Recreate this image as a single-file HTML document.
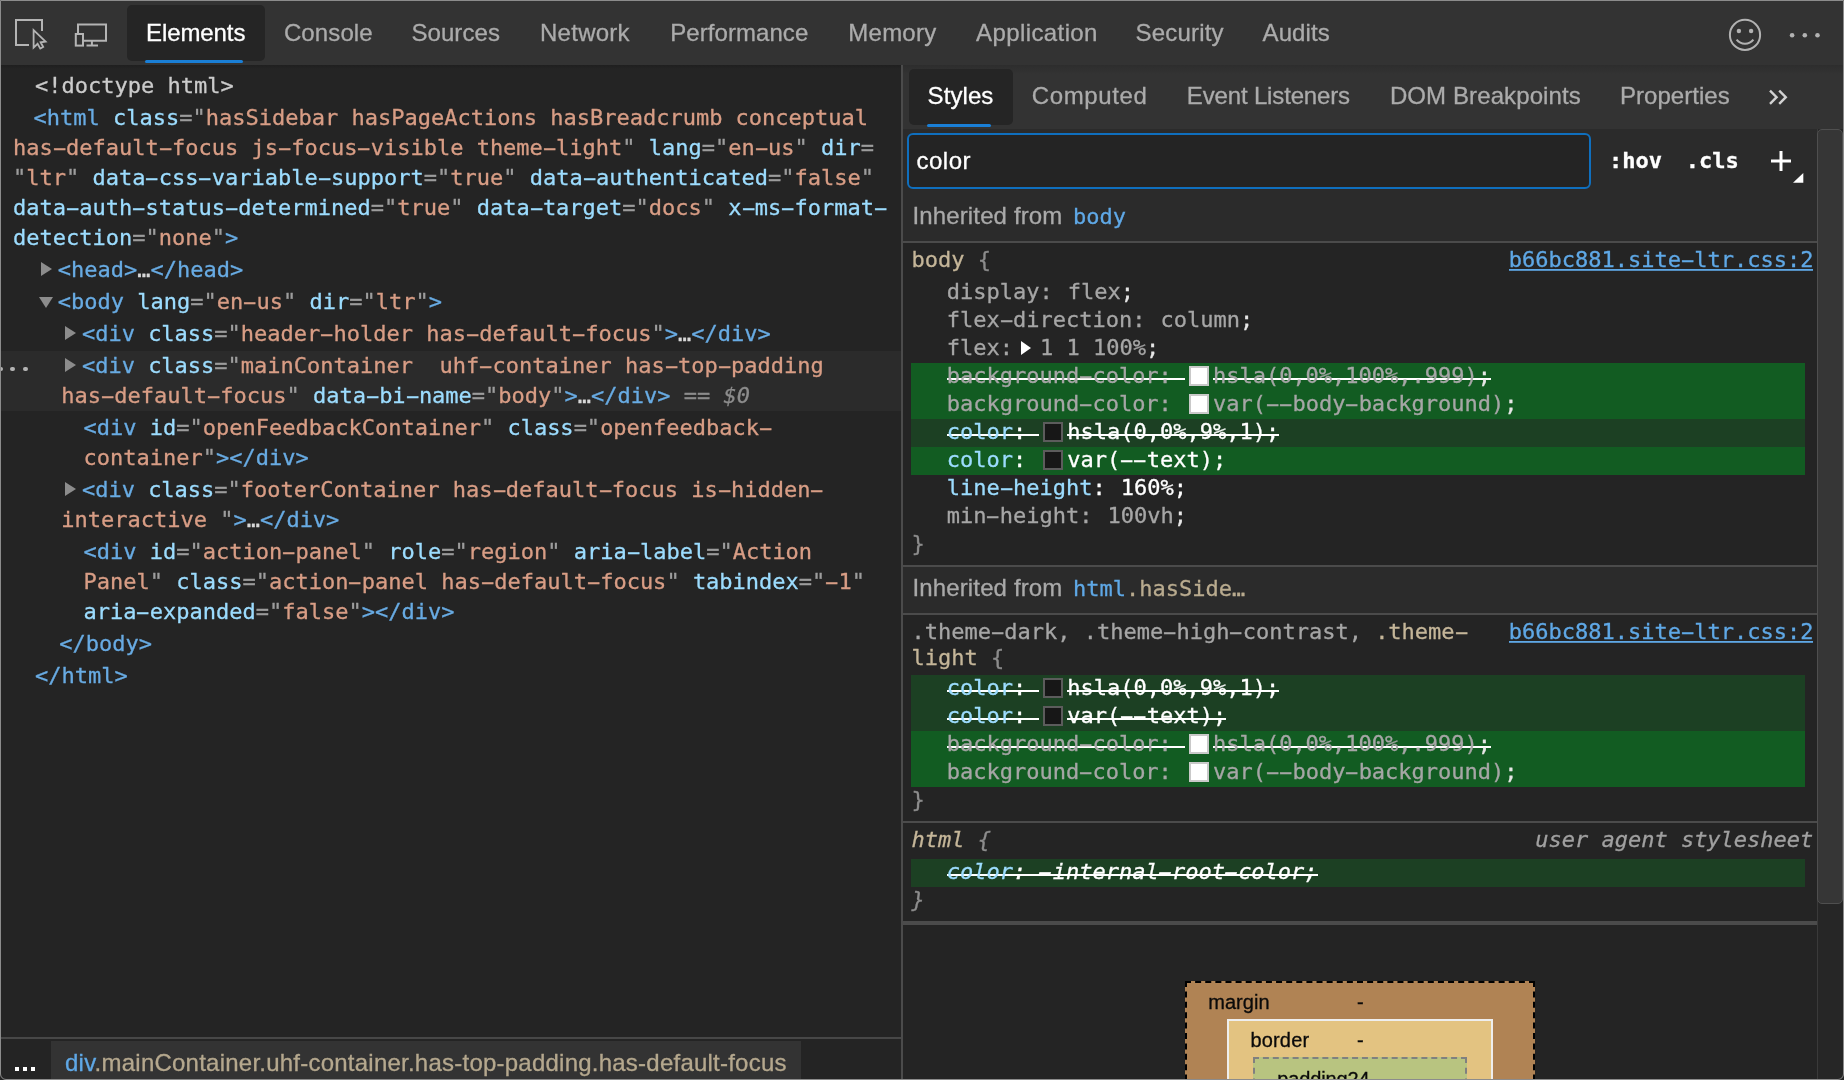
<!DOCTYPE html>
<html lang="en">
<head>
<meta charset="utf-8">
<title>DevTools - Elements - Styles filter</title>
<style>
*{box-sizing:border-box}
html,body{margin:0;padding:0;background:#242424;overflow:hidden}
body{width:1844px;height:1080px;position:relative;-webkit-font-smoothing:antialiased;font-family:"Liberation Sans",Arial,sans-serif;color:#ccc}
.a{position:absolute}
.mono,.l,.s{font-family:"DejaVu Sans Mono","Liberation Mono",monospace;font-size:22px;white-space:pre}
#frame{left:0;top:0;width:1844px;height:1080px;border:1px solid #8c8c8c;border-radius:0 0 6px 6px;z-index:50;pointer-events:none}
#topbar{left:0;top:0;width:1844px;height:65px;background:#333}
.ui{position:absolute;white-space:nowrap;font-size:24px;line-height:30px;height:30px;color:#ababab;-webkit-text-stroke:.3px}
#seltab{left:127px;top:5px;width:138px;height:56px;background:#252525;border-radius:5px}
#selline{left:145px;top:60px;width:98px;height:3px;background:#1a7fd6;border-radius:1.5px}
#elements{left:0;top:65px;width:901px;height:973px;background:linear-gradient(#1f1f1f,#242424 4px)}
#selrow{left:0;top:351px;width:901px;height:60px;background:#2b2b2b}
.l{position:absolute;height:30px;line-height:30px;-webkit-text-stroke:.3px}
.t{color:#68abe3}.n{color:#9cdcfe}.v{color:#d89d85}.p{color:#9d9d9d}.g{color:#cbcbcb}.e{color:#d8d8d8}.q{color:#8c8c8c}.d{color:#8c8c8c;font-style:italic}
.tr{position:absolute;width:0;height:0;border-style:solid}
#divider{left:901px;top:65px;width:2px;height:1015px;background:#4b4b4b}
#crumbs{left:0;top:1037px;width:901px;height:43px;background:#242424;border-top:2px solid #474747}
#crumbsel{left:51px;top:1041px;width:750px;height:39px;background:#333}
#sidetabs{left:903px;top:65px;width:941px;height:64px;background:linear-gradient(#2d2d2d,#333 9px)}
#stylesel{left:909px;top:69px;width:104px;height:56px;background:#252525;border-radius:5px}
#styleline{left:927px;top:124px;width:64px;height:3px;background:#1a7fd6;border-radius:1.5px}
#side{left:903px;top:129px;width:915px;height:951px;background:#242424}
.band{position:absolute;left:903px;width:915px;background:#2b2b2b}
.sep{position:absolute;left:903px;width:915px;background:#4b4b4b}
#filter{left:907px;top:133px;width:684px;height:56px;border:2px solid #0f6fbe;border-radius:6px;background:#242424}
.s{position:absolute;height:28px;line-height:28px;color:#a6a6a6;-webkit-text-stroke:.3px}
.vl{margin-left:1.8px}
.h{display:inline-block;transform:scaleX(1.95)}
.gb{position:absolute;left:911px;width:894px;height:28px;background:#125c22}
.gd{position:absolute;left:911px;width:894px;height:28px;background:#1c4023}
.sel{color:#c5b699}.dim{color:#a6a6a6}.br{color:#8c8c8c}.sc{color:#e6e6e6}.w{color:#fff}.pn{color:#9cdcfe}
.x{background:linear-gradient(#fff,#fff) 0 14.6px/100% 2.2px no-repeat}
.sw{display:inline-block;width:20px;height:20px;border:2px solid #5c5c5c;vertical-align:-3px;margin:0 4px 0 3.8px}
.sw.k{background:#171717}.sw.wh{background:#fff;border-color:#c9c9c9}
.lnk{color:#5fa8e6;background:linear-gradient(#5fa8e6,#5fa8e6) 0 21.7px/100% 1.8px no-repeat}
#track{left:1817px;top:129px;width:27px;height:951px;background:#262626;border-left:1px solid #3a3a3a}
#thumb{left:1817px;top:129px;width:26px;height:775px;background:#363636;border:1px solid #4f4f4f;border-radius:5px}
.bm{position:absolute}
.bt{position:absolute;font-size:20px;line-height:24px;height:24px;color:#0a0a0a;white-space:nowrap}
</style>
</head>
<body>
<div id="root" style="position:absolute;left:0;top:0;width:1844px;height:1080px;will-change:transform">
<div class="a" id="topbar"></div>
<div class="a" id="seltab"></div><div class="a" id="selline"></div>
<svg class="a" style="left:0;top:0" width="130" height="65" viewBox="0 0 130 65" fill="none" stroke="#b4b4b4" stroke-width="2">
<path d="M29 45H16V20H42V31"/>
<path d="M33.6 30.2V47.6L37.6 43.8L40.3 48.6L43.2 47L40.6 42.3L45.6 41.6Z" stroke-width="1.8" stroke-linejoin="miter"/>
<path d="M78 33V24.5H106V40.8H84"/>
<rect x="75.8" y="34" width="7.2" height="11.6"/>
<path d="M91.9 41V45M86.5 45.5H98" />
</svg>
<svg class="a" style="left:1720px;top:10px" width="110" height="50" viewBox="1720 10 110 50" fill="none">
<circle cx="1745" cy="34.9" r="15.1" stroke="#b2b2b2" stroke-width="2"/>
<circle cx="1738.9" cy="31" r="2.2" fill="#b2b2b2"/><circle cx="1751.1" cy="31" r="2.2" fill="#b2b2b2"/>
<path d="M1736.6 39.6A10.7 10.7 0 0 0 1753.4 39.6" stroke="#b2b2b2" stroke-width="2"/>
<circle cx="1792.1" cy="35.3" r="2.3" fill="#b2b2b2"/><circle cx="1804.8" cy="35.3" r="2.3" fill="#b2b2b2"/><circle cx="1817.5" cy="35.3" r="2.3" fill="#b2b2b2"/>
</svg>
<div class="a" id="elements"></div>
<div class="a" id="selrow"></div>
<div class="l" style="left:35.0px;top:71px"><span class="g">&lt;!doctype html&gt;</span></div>
<div class="l" style="left:33.6px;top:103px"><span class="t">&lt;html</span> <span class="n">class</span><span class="p">="</span><span class="v">hasSidebar hasPageActions hasBreadcrumb conceptual</span></div>
<div class="l" style="left:13.0px;top:133px"><span class="v">has<span class="h">-</span>default<span class="h">-</span>focus js<span class="h">-</span>focus<span class="h">-</span>visible theme<span class="h">-</span>light</span><span class="p">"</span> <span class="n">lang</span><span class="p">="</span><span class="v">en<span class="h">-</span>us</span><span class="p">"</span> <span class="n">dir</span><span class="p">=</span></div>
<div class="l" style="left:13.0px;top:163px"><span class="p">"</span><span class="v">ltr</span><span class="p">"</span> <span class="n">data<span class="h">-</span>css<span class="h">-</span>variable<span class="h">-</span>support</span><span class="p">="</span><span class="v">true</span><span class="p">"</span> <span class="n">data<span class="h">-</span>authenticated</span><span class="p">="</span><span class="v">false</span><span class="p">"</span></div>
<div class="l" style="left:13.0px;top:193px"><span class="n">data<span class="h">-</span>auth<span class="h">-</span>status<span class="h">-</span>determined</span><span class="p">="</span><span class="v">true</span><span class="p">"</span> <span class="n">data<span class="h">-</span>target</span><span class="p">="</span><span class="v">docs</span><span class="p">"</span> <span class="n">x<span class="h">-</span>ms<span class="h">-</span>format<span class="h">-</span></span></div>
<div class="l" style="left:13.0px;top:223px"><span class="n">detection</span><span class="p">="</span><span class="v">none</span><span class="p">"</span><span class="t">&gt;</span></div>
<div class="l" style="left:57.8px;top:255px"><span class="t">&lt;head&gt;</span><span class="e">…</span><span class="t">&lt;/head&gt;</span></div>
<div class="l" style="left:57.8px;top:287px"><span class="t">&lt;body</span> <span class="n">lang</span><span class="p">="</span><span class="v">en<span class="h">-</span>us</span><span class="p">"</span> <span class="n">dir</span><span class="p">="</span><span class="v">ltr</span><span class="p">"</span><span class="t">&gt;</span></div>
<div class="l" style="left:81.9px;top:319px"><span class="t">&lt;div</span> <span class="n">class</span><span class="p">="</span><span class="v">header<span class="h">-</span>holder has<span class="h">-</span>default<span class="h">-</span>focus</span><span class="p">"</span><span class="t">&gt;</span><span class="e">…</span><span class="t">&lt;/div&gt;</span></div>
<div class="l" style="left:81.9px;top:351px"><span class="t">&lt;div</span> <span class="n">class</span><span class="p">="</span><span class="v">mainContainer  uhf<span class="h">-</span>container has<span class="h">-</span>top<span class="h">-</span>padding</span></div>
<div class="l" style="left:61.2px;top:381px"><span class="v">has<span class="h">-</span>default<span class="h">-</span>focus</span><span class="p">"</span> <span class="n">data<span class="h">-</span>bi<span class="h">-</span>name</span><span class="p">="</span><span class="v">body</span><span class="p">"</span><span class="t">&gt;</span><span class="e">…</span><span class="t">&lt;/div&gt;</span><span class="q"> == </span><span class="d">$0</span></div>
<div class="l" style="left:83.5px;top:413px"><span class="t">&lt;div</span> <span class="n">id</span><span class="p">="</span><span class="v">openFeedbackContainer</span><span class="p">"</span> <span class="n">class</span><span class="p">="</span><span class="v">openfeedback<span class="h">-</span></span></div>
<div class="l" style="left:83.5px;top:443px"><span class="v">container</span><span class="p">"</span><span class="t">&gt;&lt;/div&gt;</span></div>
<div class="l" style="left:81.9px;top:475px"><span class="t">&lt;div</span> <span class="n">class</span><span class="p">="</span><span class="v">footerContainer has<span class="h">-</span>default<span class="h">-</span>focus is<span class="h">-</span>hidden<span class="h">-</span></span></div>
<div class="l" style="left:61.2px;top:505px"><span class="v">interactive </span><span class="p">"</span><span class="t">&gt;</span><span class="e">…</span><span class="t">&lt;/div&gt;</span></div>
<div class="l" style="left:83.5px;top:537px"><span class="t">&lt;div</span> <span class="n">id</span><span class="p">="</span><span class="v">action<span class="h">-</span>panel</span><span class="p">"</span> <span class="n">role</span><span class="p">="</span><span class="v">region</span><span class="p">"</span> <span class="n">aria<span class="h">-</span>label</span><span class="p">="</span><span class="v">Action</span></div>
<div class="l" style="left:83.5px;top:567px"><span class="v">Panel</span><span class="p">"</span> <span class="n">class</span><span class="p">="</span><span class="v">action<span class="h">-</span>panel has<span class="h">-</span>default<span class="h">-</span>focus</span><span class="p">"</span> <span class="n">tabindex</span><span class="p">="</span><span class="v"><span class="h">-</span>1</span><span class="p">"</span></div>
<div class="l" style="left:83.5px;top:597px"><span class="n">aria<span class="h">-</span>expanded</span><span class="p">="</span><span class="v">false</span><span class="p">"</span><span class="t">&gt;&lt;/div&gt;</span></div>
<div class="l" style="left:59.2px;top:629px"><span class="t">&lt;/body&gt;</span></div>
<div class="l" style="left:35.1px;top:661px"><span class="t">&lt;/html&gt;</span></div>
<div class="tr" style="left:41px;top:262px;border-width:7.5px 0 7.5px 11px;border-color:transparent transparent transparent #8c8c8c"></div>
<div class="tr" style="left:65px;top:326px;border-width:7.5px 0 7.5px 11px;border-color:transparent transparent transparent #8c8c8c"></div>
<div class="tr" style="left:65px;top:358px;border-width:7.5px 0 7.5px 11px;border-color:transparent transparent transparent #8c8c8c"></div>
<div class="tr" style="left:65px;top:482px;border-width:7.5px 0 7.5px 11px;border-color:transparent transparent transparent #8c8c8c"></div>
<div class="tr" style="left:38.5px;top:297px;border-width:11px 7.5px 0 7.5px;border-color:#8c8c8c transparent transparent transparent"></div>
<div class="a" style="left:-1.7px;top:366.7px;width:4.8px;height:4.8px;border-radius:50%;background:#b4b4b4"></div>
<div class="a" style="left:10.3px;top:366.7px;width:4.8px;height:4.8px;border-radius:50%;background:#b4b4b4"></div>
<div class="a" style="left:23.2px;top:366.7px;width:4.8px;height:4.8px;border-radius:50%;background:#b4b4b4"></div>
<div class="a" id="divider"></div>
<div class="a" id="crumbs"></div><div class="a" id="crumbsel"></div>
<div class="a" style="left:14.9px;top:1066.9px;width:4.4px;height:4.2px;background:#fff"></div>
<div class="a" style="left:22.8px;top:1066.9px;width:4.4px;height:4.2px;background:#fff"></div>
<div class="a" style="left:30.8px;top:1066.9px;width:4.4px;height:4.2px;background:#fff"></div>
<div class="a" id="sidetabs"></div><div class="a" id="stylesel"></div><div class="a" id="styleline"></div>
<svg class="a" style="left:1765px;top:85px" width="26" height="24" viewBox="1765 85 26 24" fill="none" stroke="#d2d2d2" stroke-width="2.4"><path d="M1770 90.6L1776.6 97.2L1770 103.8M1779.2 90.6L1785.8 97.2L1779.2 103.8"/></svg>
<div class="a" id="side"></div>
<div class="band" style="top:129px;height:112px"></div>
<div class="sep" style="top:241px;height:2px"></div>
<div class="band" style="top:567px;height:46px"></div>
<div class="sep" style="top:565px;height:2px"></div><div class="sep" style="top:613px;height:2px"></div>
<div class="sep" style="top:821px;height:2px"></div><div class="sep" style="top:921px;height:4px"></div>
<div class="a" id="filter"></div>
<div class="s w" style="left:1609px;top:147px;font-weight:bold">:hov</div>
<div class="s w" style="left:1685.8px;top:147px;font-weight:bold">.cls</div>
<svg class="a" style="left:1765px;top:145px" width="45" height="42" viewBox="1765 145 45 42"><path d="M1771 161H1791M1781 151V171" stroke="#fff" stroke-width="3" fill="none"/><path d="M1803.3 173V182.8H1793Z" fill="#fff"/></svg>
<div class="s" style="left:1073px;top:203px"><span class="t" style="color:#5fa8e6">body</span></div>
<div class="s" style="left:1073px;top:575px"><span style="color:#5fa8e6">html</span><span class="sel" style="color:#b9ab8f">.hasSide…</span></div>
<div class="s " style="left:911.5px;top:246.4px"><span class="sel">body</span> <span class="br">{</span></div>
<div class="s " style="left:1508.8px;top:246.4px"><span class="lnk">b66bc881.site<span class="h">-</span>ltr.css:2</span></div>
<div class="s " style="left:946.7px;top:278.4px">display: <span class="vl">flex</span><span class="sc">;</span></div>
<div class="s " style="left:946.7px;top:306.4px">flex<span class="h">-</span>direction: <span class="vl">column</span><span class="sc">;</span></div>
<div class="s " style="left:946.7px;top:334.4px">flex:</div>
<div class="s " style="left:1040.0px;top:334.4px">1 1 100%<span class="sc">;</span></div>
<div class="tr" style="left:1021px;top:341px;border-width:7px 0 7px 10px;border-color:transparent transparent transparent #fff"></div>
<div class="gb" style="top:363px"></div>
<div class="gb" style="top:391px"></div>
<div class="gd" style="top:419px"></div>
<div class="gb" style="top:447px"></div>
<div class="s " style="left:946.7px;top:362.4px"><span class="x">background<span class="h">-</span>color: </span><span class="sw wh"></span><span class="x">hsla(0,0%,100%,.999)<span class="sc">;</span></span></div>
<div class="s " style="left:946.7px;top:390.4px">background<span class="h">-</span>color: <span class="sw wh"></span>var(<span class="h">-</span><span class="h">-</span>body<span class="h">-</span>background)<span class="sc">;</span></div>
<div class="s " style="left:946.7px;top:418.4px"><span class="x w"><span class="pn">color</span>: </span><span class="sw k"></span><span class="x w">hsla(0,0%,9%,1);</span></div>
<div class="s " style="left:946.7px;top:446.4px"><span class="w"><span class="pn">color</span>: </span><span class="sw k"></span><span class="w">var(<span class="h">-</span><span class="h">-</span>text);</span></div>
<div class="s " style="left:946.7px;top:474.4px"><span class="w"><span class="pn">line<span class="h">-</span>height</span>: <span class="vl">160%;</span></span></div>
<div class="s " style="left:946.7px;top:502.4px">min<span class="h">-</span>height: <span class="vl">100vh</span><span class="sc">;</span></div>
<div class="s " style="left:911.5px;top:530.4px"><span class="br">}</span></div>
<div class="s " style="left:911.5px;top:618.4px"><span class="dim">.theme<span class="h">-</span>dark, .theme<span class="h">-</span>high<span class="h">-</span>contrast, </span><span class="sel">.theme<span class="h">-</span></span></div>
<div class="s " style="left:1508.8px;top:618.4px"><span class="lnk">b66bc881.site<span class="h">-</span>ltr.css:2</span></div>
<div class="s " style="left:911.5px;top:643.9px"><span class="sel">light</span> <span class="br">{</span></div>
<div class="gd" style="top:675px"></div>
<div class="gd" style="top:703px"></div>
<div class="gb" style="top:731px"></div>
<div class="gb" style="top:759px"></div>
<div class="s " style="left:946.7px;top:674.4px"><span class="x w"><span class="pn">color</span>: </span><span class="sw k"></span><span class="x w">hsla(0,0%,9%,1);</span></div>
<div class="s " style="left:946.7px;top:702.4px"><span class="x w"><span class="pn">color</span>: </span><span class="sw k"></span><span class="x w">var(<span class="h">-</span><span class="h">-</span>text);</span></div>
<div class="s " style="left:946.7px;top:730.4px"><span class="x">background<span class="h">-</span>color: </span><span class="sw wh"></span><span class="x">hsla(0,0%,100%,.999)<span class="sc">;</span></span></div>
<div class="s " style="left:946.7px;top:758.4px">background<span class="h">-</span>color: <span class="sw wh"></span>var(<span class="h">-</span><span class="h">-</span>body<span class="h">-</span>background)<span class="sc">;</span></div>
<div class="s " style="left:911.5px;top:786.4px"><span class="br">}</span></div>
<div class="gd" style="top:859px"></div>
<div class="s " style="left:911.5px;top:826.4px"><i><span class="sel">html</span> <span class="br">{</span></i></div>
<div class="s " style="left:1535.2px;top:826.4px"><i style="color:#a0a0a0">user agent stylesheet</i></div>
<div class="s " style="left:946.7px;top:858.4px"><i class="x w"><span class="pn">color</span>: <span class="h">-</span>internal<span class="h">-</span>root<span class="h">-</span>color;</i></div>
<div class="s " style="left:911.5px;top:886.4px"><i class="br">}</i></div>
<div class="a" id="track"></div><div class="a" id="thumb"></div>
<div class="bm" style="left:1185px;top:981px;width:350px;height:110px;background:#b08354;border:2px dashed #000"></div>
<div class="bm" style="left:1227px;top:1019px;width:266px;height:80px;background:#e3c381;border:2px solid #eee"></div>
<div class="bm" style="left:1253px;top:1057px;width:214px;height:60px;background:#b8c480;border:2px dashed #808080"></div>
<div class="ui" id="u0" style="left:146.10px;top:17.5px;letter-spacing:-0.106px;font-size:24px;color:#fff">Elements</div>
<div class="ui" id="u1" style="left:283.90px;top:17.5px;letter-spacing:0.115px;font-size:24px">Console</div>
<div class="ui" id="u2" style="left:411.40px;top:17.5px;letter-spacing:0.093px;font-size:24px">Sources</div>
<div class="ui" id="u3" style="left:540.00px;top:17.5px;letter-spacing:0.263px;font-size:24px">Network</div>
<div class="ui" id="u4" style="left:670.20px;top:17.5px;letter-spacing:0.066px;font-size:24px">Performance</div>
<div class="ui" id="u5" style="left:848.30px;top:17.5px;letter-spacing:0.246px;font-size:24px">Memory</div>
<div class="ui" id="u6" style="left:976.10px;top:17.5px;letter-spacing:0.394px;font-size:24px">Application</div>
<div class="ui" id="u7" style="left:1135.50px;top:17.5px;letter-spacing:0.201px;font-size:24px">Security</div>
<div class="ui" id="u8" style="left:1262.50px;top:17.5px;letter-spacing:0.119px;font-size:24px">Audits</div>
<div class="ui" id="u9" style="left:927.60px;top:81.2px;letter-spacing:0.069px;font-size:24px;color:#fff">Styles</div>
<div class="ui" id="u10" style="left:1031.70px;top:81.2px;letter-spacing:0.631px;font-size:24px">Computed</div>
<div class="ui" id="u11" style="left:1186.80px;top:81.2px;letter-spacing:-0.152px;font-size:24px">Event Listeners</div>
<div class="ui" id="u12" style="left:1389.90px;top:81.2px;letter-spacing:0.107px;font-size:24px">DOM Breakpoints</div>
<div class="ui" id="u13" style="left:1620.00px;top:81.2px;letter-spacing:0.035px;font-size:24px">Properties</div>
<div class="ui" id="u14" style="left:916.40px;top:145.6px;letter-spacing:0.543px;font-size:24px;color:#fff">color</div>
<div class="ui" id="u15" style="left:912.50px;top:201.3px;letter-spacing:0.133px;font-size:24px;color:#a9a9a9">Inherited from</div>
<div class="ui" id="u16" style="left:912.50px;top:573.3px;letter-spacing:0.133px;font-size:24px;color:#a9a9a9">Inherited from</div>
<div class="ui" id="u17" style="left:65.00px;top:1047.7px;letter-spacing:0.232px;font-size:24px;color:#b5a88e"><span style="color:#5fa8e6">div</span>.mainContainer.uhf-container.has-top-padding.has-default-focus</div>
<div class="ui" id="u18" style="left:1208.20px;top:986.9px;letter-spacing:0.058px;font-size:20px;color:#0a0a0a">margin</div>
<div class="ui" id="u19" style="left:1250.40px;top:1024.6px;letter-spacing:0.190px;font-size:20px;color:#0a0a0a">border</div>
<div class="ui" id="u20" style="left:1277.20px;top:1063.9px;letter-spacing:-0.126px;font-size:20px;color:#0a0a0a">padding24</div>
<div class="ui" id="u21" style="left:1357.10px;top:986.9px;letter-spacing:0.000px;font-size:20px;color:#0a0a0a">-</div>
<div class="ui" id="u22" style="left:1357.10px;top:1024.6px;letter-spacing:0.000px;font-size:20px;color:#0a0a0a">-</div>
<div class="a" id="frame"></div>
</div>
</body>
</html>
